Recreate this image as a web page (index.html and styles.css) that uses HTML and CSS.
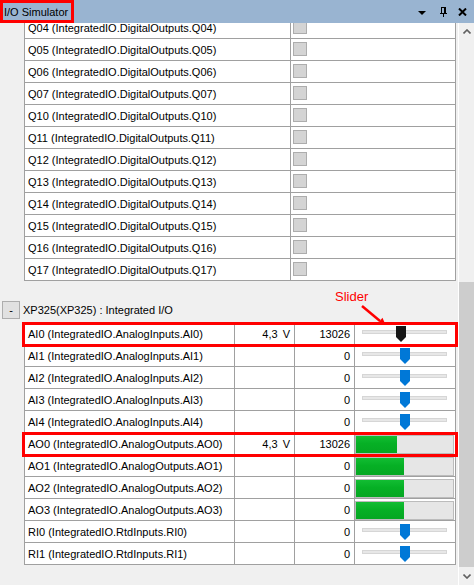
FILE: index.html
```html
<!DOCTYPE html>
<html lang="en">
<head>
<meta charset="UTF-8" />
<title>I/O Simulator</title>
<link rel="stylesheet" href="styles.css">
</head>
<body>
  <div class="window">
    <div class="titlebar">
      <span class="title">I/O Simulator</span>
      <div class="tools">
        <svg class="tool-menu" width="8" height="4" viewBox="0 0 8 4"><path d="M0 0H8L4 4Z" fill="#000"/></svg>
        <svg class="tool-pin" width="7" height="10" viewBox="0 0 7 10">
          <rect x="1" y="0" width="5" height="1" fill="#000"/>
          <rect x="1" y="0" width="1" height="6" fill="#000"/>
          <rect x="4" y="0" width="2" height="6" fill="#000"/>
          <rect x="0" y="6" width="7" height="1" fill="#000"/>
          <rect x="3" y="7" width="1" height="3" fill="#000"/>
        </svg>
        <svg class="tool-close" width="9" height="8" viewBox="0 0 9 8"><path d="M1 0.5L8 7.5M8 0.5L1 7.5" stroke="#000" stroke-width="2"/></svg>
      </div>
    </div>

    <div class="main">
      <div class="content">
        <div class="grid digital">
          <div class="row"><div class="cell name">Q04 (IntegratedIO.DigitalOutputs.Q04)</div><div class="cell"><span class="check"></span></div></div>
          <div class="row"><div class="cell name">Q05 (IntegratedIO.DigitalOutputs.Q05)</div><div class="cell"><span class="check"></span></div></div>
          <div class="row"><div class="cell name">Q06 (IntegratedIO.DigitalOutputs.Q06)</div><div class="cell"><span class="check"></span></div></div>
          <div class="row"><div class="cell name">Q07 (IntegratedIO.DigitalOutputs.Q07)</div><div class="cell"><span class="check"></span></div></div>
          <div class="row"><div class="cell name">Q10 (IntegratedIO.DigitalOutputs.Q10)</div><div class="cell"><span class="check"></span></div></div>
          <div class="row"><div class="cell name">Q11 (IntegratedIO.DigitalOutputs.Q11)</div><div class="cell"><span class="check"></span></div></div>
          <div class="row"><div class="cell name">Q12 (IntegratedIO.DigitalOutputs.Q12)</div><div class="cell"><span class="check"></span></div></div>
          <div class="row"><div class="cell name">Q13 (IntegratedIO.DigitalOutputs.Q13)</div><div class="cell"><span class="check"></span></div></div>
          <div class="row"><div class="cell name">Q14 (IntegratedIO.DigitalOutputs.Q14)</div><div class="cell"><span class="check"></span></div></div>
          <div class="row"><div class="cell name">Q15 (IntegratedIO.DigitalOutputs.Q15)</div><div class="cell"><span class="check"></span></div></div>
          <div class="row"><div class="cell name">Q16 (IntegratedIO.DigitalOutputs.Q16)</div><div class="cell"><span class="check"></span></div></div>
          <div class="row"><div class="cell name">Q17 (IntegratedIO.DigitalOutputs.Q17)</div><div class="cell"><span class="check"></span></div></div>
        </div>

        <div class="group">
          <button class="toggle" type="button">-</button>
          <span>XP325(XP325) : Integrated I/O</span>
        </div>

        <div class="grid analog">
          <div class="row marked">
            <div class="cell name">AI0 (IntegratedIO.AnalogInputs.AI0)</div>
            <div class="cell num">4,3 V</div>
            <div class="cell num">13026</div>
            <div class="cell slider"><div class="track-line"></div><svg class="knob" style="left:41px" viewBox="0 0 10 16"><path d="M0 0H10V11L5 16L0 11Z" fill="#171717"/></svg></div>
          </div>
          <div class="row">
            <div class="cell name">AI1 (IntegratedIO.AnalogInputs.AI1)</div>
            <div class="cell num"></div>
            <div class="cell num">0</div>
            <div class="cell slider"><div class="track-line"></div><svg class="knob" style="left:45px" viewBox="0 0 10 16"><path d="M0 0H10V11L5 16L0 11Z" fill="#0078d7"/></svg></div>
          </div>
          <div class="row">
            <div class="cell name">AI2 (IntegratedIO.AnalogInputs.AI2)</div>
            <div class="cell num"></div>
            <div class="cell num">0</div>
            <div class="cell slider"><div class="track-line"></div><svg class="knob" style="left:45px" viewBox="0 0 10 16"><path d="M0 0H10V11L5 16L0 11Z" fill="#0078d7"/></svg></div>
          </div>
          <div class="row">
            <div class="cell name">AI3 (IntegratedIO.AnalogInputs.AI3)</div>
            <div class="cell num"></div>
            <div class="cell num">0</div>
            <div class="cell slider"><div class="track-line"></div><svg class="knob" style="left:45px" viewBox="0 0 10 16"><path d="M0 0H10V11L5 16L0 11Z" fill="#0078d7"/></svg></div>
          </div>
          <div class="row">
            <div class="cell name">AI4 (IntegratedIO.AnalogInputs.AI4)</div>
            <div class="cell num"></div>
            <div class="cell num">0</div>
            <div class="cell slider"><div class="track-line"></div><svg class="knob" style="left:45px" viewBox="0 0 10 16"><path d="M0 0H10V11L5 16L0 11Z" fill="#0078d7"/></svg></div>
          </div>
          <div class="row marked">
            <div class="cell name">AO0 (IntegratedIO.AnalogOutputs.AO0)</div>
            <div class="cell num">4,3 V</div>
            <div class="cell num">13026</div>
            <div class="cell"><div class="bar"><div class="fill" style="width:41px"></div></div></div>
          </div>
          <div class="row">
            <div class="cell name">AO1 (IntegratedIO.AnalogOutputs.AO1)</div>
            <div class="cell num"></div>
            <div class="cell num">0</div>
            <div class="cell"><div class="bar"><div class="fill" style="width:48px"></div></div></div>
          </div>
          <div class="row">
            <div class="cell name">AO2 (IntegratedIO.AnalogOutputs.AO2)</div>
            <div class="cell num"></div>
            <div class="cell num">0</div>
            <div class="cell"><div class="bar"><div class="fill" style="width:48px"></div></div></div>
          </div>
          <div class="row">
            <div class="cell name">AO3 (IntegratedIO.AnalogOutputs.AO3)</div>
            <div class="cell num"></div>
            <div class="cell num">0</div>
            <div class="cell"><div class="bar"><div class="fill" style="width:48px"></div></div></div>
          </div>
          <div class="row">
            <div class="cell name">RI0 (IntegratedIO.RtdInputs.RI0)</div>
            <div class="cell num"></div>
            <div class="cell num">0</div>
            <div class="cell slider"><div class="track-line"></div><svg class="knob" style="left:45px" viewBox="0 0 10 16"><path d="M0 0H10V11L5 16L0 11Z" fill="#0078d7"/></svg></div>
          </div>
          <div class="row">
            <div class="cell name">RI1 (IntegratedIO.RtdInputs.RI1)</div>
            <div class="cell num"></div>
            <div class="cell num">0</div>
            <div class="cell slider"><div class="track-line"></div><svg class="knob" style="left:45px" viewBox="0 0 10 16"><path d="M0 0H10V11L5 16L0 11Z" fill="#0078d7"/></svg></div>
          </div>
        </div>

        <span class="note">Slider</span>
        <svg class="note-arrow" width="36" height="30" viewBox="0 0 36 30">
          <line x1="7" y1="6" x2="25" y2="21" stroke="#f00" stroke-width="2.5"/>
          <path d="M31 26L22.3 24L27.5 17.8Z" fill="#f00"/>
        </svg>
      </div>

      <div class="scrollbar">
        <div class="sb-btn">
          <svg width="8" height="5" viewBox="0 0 8 5"><path d="M0.5 4.5L4 1L7.5 4.5" fill="none" stroke="#606060" stroke-width="1.6"/></svg>
        </div>
        <div class="track"><div class="thumb"></div></div>
        <div class="sb-btn">
          <svg width="8" height="5" viewBox="0 0 8 5"><path d="M0.5 0.5L4 4L7.5 0.5" fill="none" stroke="#606060" stroke-width="1.6"/></svg>
        </div>
      </div>
    </div>
  </div>
</body>
</html>
```

FILE: styles.css
```css
* {
  box-sizing: border-box;
}
html, body {
  margin: 0;
  padding: 0;
}
body {
  width: 474px;
  height: 585px;
  overflow: hidden;
  background-color: #f0f0f0;
  font-family: "Liberation Sans", Arial, sans-serif;
  font-size: 11px;
  color: #000;
}

.window {
  display: flex;
  flex-direction: column;
  height: 585px;
}

/* title bar */
.titlebar {
  height: 23px;
  flex: none;
  background-color: #99b4d1;
  display: flex;
  align-items: center;
}
.title {
  width: 74px;
  height: 23px;
  border: 3px solid #f00;
  padding-left: 1px;
  line-height: 18px;
  white-space: nowrap;
}
.tools {
  margin-left: auto;
  padding-right: 7px;
  display: flex;
  align-items: center;
}
.tool-menu {
  margin-top: 2px;
}
.tool-pin {
  margin-left: 14px;
}
.tool-close {
  margin-left: 11px;
}

.main {
  flex: 1;
  min-height: 0;
  display: flex;
}

.content {
  position: relative;
  flex: 1;
  overflow: hidden;
}

/* grids */
.grid {
  width: 432px;
  margin-left: 24px;
  display: flex;
  flex-direction: column;
  gap: 1px;
  background-color: #a0a0a0;
  border: 1px solid #a0a0a0;
}
.digital {
  margin-top: -7px;
}
.row {
  display: grid;
  gap: 1px;
  height: 21px;
}
.digital .row {
  grid-template-columns: 265px 164px;
}
.analog .row {
  grid-template-columns: 209px 59px 59px 100px;
}
.cell {
  background-color: #fff;
  line-height: 23px;
  white-space: nowrap;
  overflow: hidden;
}
.name {
  padding-left: 3px;
}
.num {
  text-align: right;
  padding-right: 4px;
  word-spacing: 2px;
}

.check {
  display: block;
  width: 14px;
  height: 14px;
  margin: 3px 0 0 2px;
  background-color: #d4d4d4;
  border: 1px solid #adadad;
}

/* slider */
.slider {
  position: relative;
  padding: 7px 0 0 7px;
}
.track-line {
  width: 85px;
  height: 4px;
  background-color: #e7e7e7;
  border: 1px solid #d6d6d6;
}
.knob {
  position: absolute;
  top: 3px;
  width: 10px;
  height: 16px;
}

/* progress bar */
.bar {
  height: 19px;
  margin: 2px 1px 0 0;
  background-color: #e6e6e6;
  border: 1px solid #bcbcbc;
}
.fill {
  height: 100%;
  background: linear-gradient(to bottom, #12bd33, #06b025 45%, #05a722);
}

/* group header */
.group {
  display: flex;
  align-items: center;
  gap: 3px;
  height: 18px;
  margin: 20px 0 3px 2px;
}
.toggle {
  width: 18px;
  height: 18px;
  padding: 0;
  border: 1px solid #adadad;
  background-color: #e1e1e1;
  font-family: inherit;
  font-size: 11px;
  line-height: 14px;
  color: #000;
}

/* red annotations */
.marked {
  position: relative;
  z-index: 1;
}
.marked::after {
  content: "";
  position: absolute;
  top: -1px;
  bottom: -3px;
  left: -3px;
  right: -3px;
  border: 3px solid #f00;
}
.note {
  position: absolute;
  top: 266px;
  left: 335px;
  font-size: 13px;
  line-height: 15px;
  color: #f00;
}
.note-arrow {
  position: absolute;
  top: 277px;
  left: 355px;
}

/* scrollbar */
.scrollbar {
  width: 16px;
  flex: none;
  display: flex;
  flex-direction: column;
  border-left: 1px solid #fff;
  background-color: #f0f0f0;
}
.sb-btn {
  height: 17px;
  flex: none;
  display: flex;
  align-items: center;
  justify-content: center;
}
.track {
  flex: 1;
}
.thumb {
  margin-top: 242px;
  height: 285px;
  background-color: #cdcdcd;
}
```
